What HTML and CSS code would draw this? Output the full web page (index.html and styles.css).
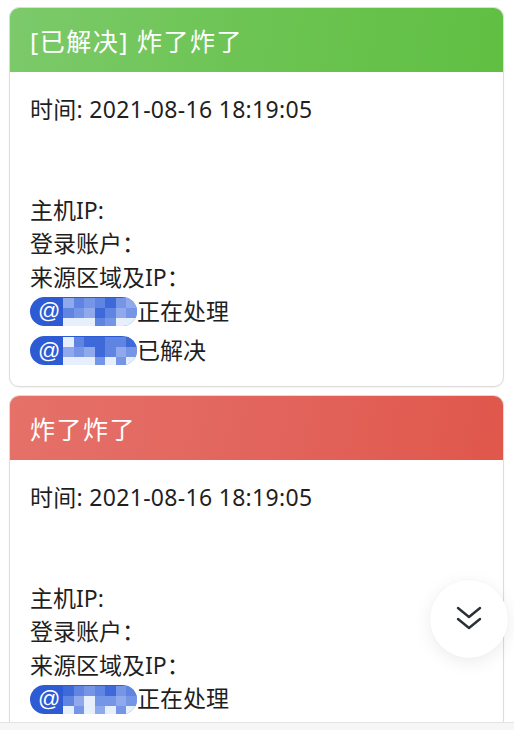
FILE: index.html
```html
<!DOCTYPE html>
<html lang="zh-CN">
<head>
<meta charset="utf-8">
<title>告警</title>
<link rel="stylesheet" href="styles.css">
</head>
<body>
<div class="list">
  <div class="card-tail"></div>

  <div class="card">
    <div class="card-head green">[已解决] 炸了炸了</div>
    <div class="card-body">
      <div class="line time">时间: 2021-08-16 18:19:05</div>
      <div class="line">&nbsp;</div>
      <div class="line">&nbsp;</div>
      <div class="line">主机IP:</div>
      <div class="line">登录账户：</div>
      <div class="line">来源区域及IP：</div>
      <div class="line mention-row"><span class="pill"><span class="at">@</span><span class="mosaic"><i class="c1"></i><i class="c2"></i><i class="c3"></i><i class="c2"></i><i class="c4"></i><i class="c3"></i><i class="c1"></i><i class="c2"></i><i class="c3"></i><i class="c1"></i><i class="c4"></i><i class="c2"></i><i class="c1"></i><i class="c3"></i><i class="c5"></i><i class="c5"></i><i class="c5"></i><i class="c2"></i><i class="c3"></i><i class="c5"></i><i class="c5"></i></span></span>正在处理</div>
      <div class="line mention-row"><span class="pill"><span class="at">@</span><span class="mosaic"><i class="c5"></i><i class="c2"></i><i class="c4"></i><i class="c4"></i><i class="c2"></i><i class="c2"></i><i class="c4"></i><i class="c1"></i><i class="c3"></i><i class="c1"></i><i class="c4"></i><i class="c2"></i><i class="c1"></i><i class="c3"></i><i class="c5"></i><i class="c5"></i><i class="c5"></i><i class="c3"></i><i class="c5"></i><i class="c3"></i><i class="c5"></i></span></span>已解决</div>
    </div>
  </div>

  <div class="card">
    <div class="card-head red">炸了炸了</div>
    <div class="card-body">
      <div class="line time">时间: 2021-08-16 18:19:05</div>
      <div class="line">&nbsp;</div>
      <div class="line">&nbsp;</div>
      <div class="line">主机IP:</div>
      <div class="line">登录账户：</div>
      <div class="line">来源区域及IP：</div>
      <div class="line mention-row"><span class="pill"><span class="at">@</span><span class="mosaic"><i class="c4"></i><i class="c2"></i><i class="c3"></i><i class="c2"></i><i class="c4"></i><i class="c3"></i><i class="c2"></i><i class="c2"></i><i class="c1"></i><i class="c5"></i><i class="c3"></i><i class="c3"></i><i class="c1"></i><i class="c3"></i><i class="c5"></i><i class="c3"></i><i class="c5"></i><i class="c1"></i><i class="c5"></i><i class="c3"></i><i class="c5"></i></span></span>正在处理</div>
      <div class="line">&nbsp;</div>
    </div>
  </div>
</div>

<button class="fab" aria-label="滚动到底部">
  <svg width="26" height="28" viewBox="0 0 26 28" fill="none" stroke="#2b2f36" stroke-width="2.4" stroke-linecap="round" stroke-linejoin="round">
    <path d="M2 3 L13 12 L24 3"/>
    <path d="M2 14 L13 23 L24 14"/>
  </svg>
</button>

<div class="bottom-bar"></div>
</body>
</html>
```
FILE: styles.css
```css
* { box-sizing: border-box; }
html, body { margin: 0; padding: 0; background: #ffffff; }
body {
  font-family: "Noto Sans", "Noto Sans CJK SC", sans-serif;
  color: #1f1f1f;
  overflow: hidden;
  height: 730px;
}
.list {
  padding: 0 10px 0 9px;
  display: flex;
  flex-direction: column;
  gap: 8px;
}
.card-tail {
  height: 4px;
  margin-top: -5px;
  border: 1px solid #dcdcdc;
  border-top: none;
  border-radius: 0 0 10px 10px;
  box-shadow: 0 1px 2px rgba(0,0,0,0.06);
}
.card {
  border: 1px solid #dcdcdc;
  border-radius: 10px;
  overflow: hidden;
  box-shadow: 0 1px 2px rgba(0,0,0,0.06);
  background: #fff;
}
.card-head {
  height: 64px;
  display: flex;
  align-items: center;
  padding-left: 20px;
  color: #fff;
  font-size: 25px;
  letter-spacing: 1.5px;
}
.green { background: linear-gradient(100deg, #7cca6b 0%, #6cc452 50%, #60bf43 100%); }
.red { background: linear-gradient(100deg, #e57169 0%, #e2655d 50%, #e0574b 100%); }
.card-body {
  padding: 21px 20px 18px;
  font-size: 23px;
  line-height: 33.6px;
}
.line { white-space: nowrap; height: 33.6px; }
.time { letter-spacing: 0.3px; }
.mention-row { display: flex; align-items: center; }
.mention-row + .mention-row { margin-top: 6px; }
.pill {
  display: inline-flex;
  align-items: center;
  flex: none;
  height: 29px;
  width: 107px;
  border-radius: 15px;
  background: #2d5bd3;
  padding-left: 8px;
  overflow: hidden;
  box-shadow: inset -2px 0 0 rgba(255,255,255,0.35);
}
.at {
  color: #fff;
  font-size: 22px;
  line-height: 1;
  font-family: "Liberation Sans", sans-serif;
  margin-right: 3px;
}
.mosaic {
  display: grid;
  grid-template-columns: repeat(7, 10.5px);
  grid-auto-rows: 10px;
  margin-top: 3px;
}
.mosaic i { display: block; }
.c1 { background: #8fa9ec; }
.c2 { background: #5f84e2; }
.c3 { background: #7596e6; }
.c4 { background: #3e69d8; }
.c5 { background: #e7eefc; }
.fab {
  position: fixed;
  left: 430px;
  top: 580px;
  width: 78px;
  height: 78px;
  border-radius: 50%;
  border: none;
  background: #fff;
  box-shadow: 0 4px 18px rgba(0,0,0,0.08), 0 0 2px rgba(0,0,0,0.06);
  display: flex;
  align-items: center;
  justify-content: center;
  padding: 0;
}
.bottom-bar {
  position: fixed;
  left: 0;
  right: 0;
  bottom: 0;
  height: 8px;
  background: #f6f6f6;
  border-top: 1px solid #e4e4e4;
}
```
